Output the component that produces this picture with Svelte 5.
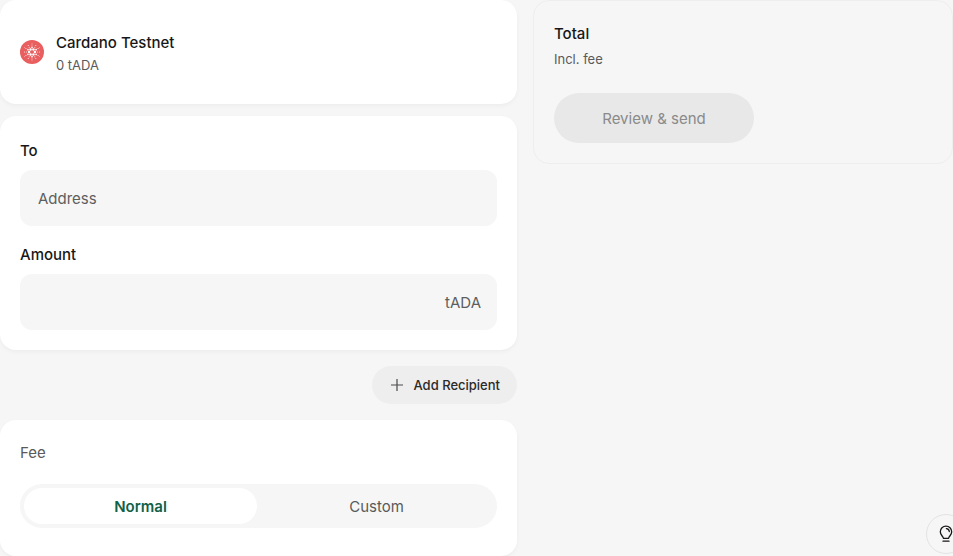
<script>
  let address = $state('');
  let amount = $state('');
  let feeMode = $state('normal');

  const modes = [
    { id: 'normal', label: 'Normal' },
    { id: 'custom', label: 'Custom' }
  ];

  // Rings of the Cardano mark: dot count, distance from centre, dot radius, start angle
  const rings = [
    { count: 6, distance: 2.9, radius: 1.2, start: 0 },
    { count: 6, distance: 4.7, radius: 0.85, start: 30 },
    { count: 6, distance: 5.6, radius: 0.5, start: 0 },
    { count: 6, distance: 7, radius: 0.5, start: 30 },
    { count: 6, distance: 7.6, radius: 0.5, start: 0 },
    { count: 6, distance: 8.8, radius: 0.4, start: 30 }
  ];
  const dots = rings.flatMap(({ count, distance, radius, start }) =>
    Array.from({ length: count }, (_, i) => {
      const angle = ((start + (i * 360) / count) * Math.PI) / 180;
      return { x: 12 + distance * Math.cos(angle), y: 12 + distance * Math.sin(angle), radius };
    })
  );
</script>

<main class="page">
  <form class="column" id="send-form" onsubmit={(e) => e.preventDefault()}>
    <section class="card account">
      <svg class="coin" viewBox="0 0 24 24" aria-hidden="true">
        <circle cx="12" cy="12" r="12" fill="#e95e5e" />
        {#each dots as dot}
          <circle cx={dot.x} cy={dot.y} r={dot.radius} fill="#fff" />
        {/each}
      </svg>
      <div>
        <div class="name">Cardano Testnet</div>
        <div class="small">0 tADA</div>
      </div>
    </section>

    <section class="card recipient">
      <div class="field">
        <label for="address">To</label>
        <div class="box">
          <input id="address" type="text" placeholder="Address" autocomplete="off" bind:value={address} />
        </div>
      </div>
      <div class="field">
        <label for="amount">Amount</label>
        <div class="box">
          <input id="amount" type="text" inputmode="decimal" autocomplete="off" bind:value={amount} />
          <span class="unit">tADA</span>
        </div>
      </div>
    </section>

    <button class="add" type="button">
      <svg viewBox="0 0 14 14" aria-hidden="true">
        <path d="M7 1v12M1 7h12" fill="none" stroke="#4a4a4a" stroke-width="1.2" />
      </svg>
      Add Recipient
    </button>

    <fieldset class="card fee">
      <div class="fee-title" id="fee-title">Fee</div>
      <div class="tabs" role="radiogroup" aria-labelledby="fee-title">
        {#each modes as mode}
          <label class="tab" class:active={feeMode === mode.id}>
            <input type="radio" name="fee" value={mode.id} bind:group={feeMode} />
            {mode.label}
          </label>
        {/each}
      </div>
    </fieldset>
  </form>

  <aside class="summary">
    <div class="name">Total</div>
    <div class="small">Incl. fee</div>
    <button class="send" type="submit" form="send-form" disabled>Review &amp; send</button>
  </aside>
</main>

<button class="help" type="button" aria-label="Guide">
  <svg viewBox="0 0 20 20" aria-hidden="true">
    <path
      d="M7.4 14.3C7.2 12.3 4.3 11.2 4.3 7.8a5.7 5.7 0 0 1 11.4 0c0 3.4-2.9 4.5-3.1 6.5zM10.4 4.6c1.7.2 2.7 1.2 2.9 2.9M7 17.2h6"
      fill="none"
      stroke="#171717"
      stroke-width="1.3"
      stroke-linecap="round"
      stroke-linejoin="round"
    />
  </svg>
</button>

<style>
  :global(body) {
    margin: 0;
    background: #f6f6f6;
    overflow-x: hidden;
  }

  .page,
  .help {
    font-family: Inter, 'Liberation Sans', sans-serif;
  }

  .page {
    display: grid;
    grid-template-columns: minmax(0, 1fr) 420px;
    gap: 16px;
    align-items: start;
    color: #171717;
    font-size: 15px;
    line-height: 24px;
  }

  .page *,
  .help {
    box-sizing: border-box;
  }

  button,
  input {
    font: inherit;
  }

  .column {
    display: flex;
    flex-direction: column;
  }

  .card {
    margin: 0;
    border: 0;
    border-radius: 16px;
    background: #fff;
    box-shadow: 0 2px 4px rgba(0, 0, 0, 0.04);
  }

  .account {
    display: flex;
    align-items: center;
    gap: 12px;
    padding: 30px 20px;
  }

  .coin {
    width: 24px;
    height: 24px;
  }

  .name {
    font-weight: 500;
    line-height: 26px;
  }

  .small {
    color: #5a5a5a;
    font-size: 13px;
    line-height: 18px;
  }

  .recipient {
    display: flex;
    flex-direction: column;
    gap: 14px;
    margin-top: 12px;
    padding: 20px;
  }

  .field {
    display: flex;
    flex-direction: column;
    gap: 4px;
  }

  .field label {
    font-weight: 500;
    line-height: 30px;
  }

  .box {
    display: flex;
    align-items: center;
    height: 56px;
    padding: 0 16px 0 18px;
    border-radius: 12px;
    background: #f6f6f6;
  }

  .box input {
    flex: 1;
    min-width: 0;
    height: 100%;
    padding: 0;
    border: 0;
    outline: 0;
    background: transparent;
    color: #171717;
  }

  .box input::placeholder {
    color: #5e5e5e;
    opacity: 1;
  }

  .unit {
    color: #5e5e5e;
    line-height: 26px;
    padding-top: 2px;
  }

  .add {
    display: flex;
    align-items: center;
    align-self: flex-end;
    gap: 9px;
    height: 38px;
    margin: 16px 0;
    padding: 0 17px 0 18px;
    border: 0;
    border-radius: 19px;
    background: #eee;
    color: #2a2a2a;
    font-size: 13px;
    font-weight: 500;
  }

  .add svg {
    width: 14px;
    height: 14px;
  }

  .fee {
    padding: 20px 20px 28px;
  }

  .fee-title {
    padding: 1px 0 19px;
    color: #5a5a5a;
  }

  .tabs {
    display: flex;
    gap: 3px;
    height: 44px;
    padding: 4px;
    border-radius: 22px;
    background: #f6f6f6;
  }

  .tab {
    position: relative;
    display: flex;
    flex: 1;
    align-items: center;
    justify-content: center;
    padding-top: 2px;
    border-radius: 18px;
    color: #5a5a5a;
    cursor: pointer;
  }

  .tab.active {
    background: #fff;
    color: #0f6148;
    font-weight: 600;
  }

  .tab input {
    position: absolute;
    inset: 0;
    margin: 0;
    opacity: 0;
    cursor: pointer;
  }

  .summary {
    padding: 20px;
    border: 1px solid #eee;
    border-radius: 16px;
  }

  .summary .small {
    margin: 3px 0 25px;
  }

  .send {
    display: block;
    width: 200px;
    height: 50px;
    padding: 2px 0 0;
    border: 0;
    border-radius: 25px;
    background: #e8e8e8;
    color: #8a8a8a;
  }

  .help {
    position: fixed;
    right: -13px;
    bottom: 2px;
    display: flex;
    align-items: center;
    justify-content: center;
    width: 40px;
    height: 40px;
    padding: 0;
    border: 1px solid #e2e2e2;
    border-radius: 50%;
    background: #f6f6f6;
  }

  .help svg {
    width: 20px;
    height: 20px;
  }
</style>
